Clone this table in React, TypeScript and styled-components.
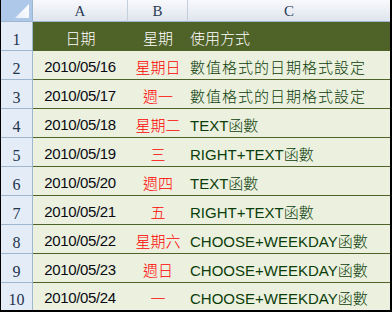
import React from 'react';
import styled, { createGlobalStyle } from 'styled-components';

const GlobalStyle = createGlobalStyle`
  html, body {
    margin: 0;
    padding: 0;
    background: #ffffff;
  }
  * {
    box-sizing: border-box;
  }
`;

const olive = '#4f6228';
const headerLine = '#9eb6ce';

const Sheet = styled.div`
  width: 392px;
  height: 312px;
  display: grid;
  grid-template-columns: 32px 95px 60px 1fr;
  grid-template-rows: 22px 29px repeat(8, 29px) 27px;
  border-left: 1px solid #000000;
  border-right: 2px solid #000000;
  border-bottom: 2px solid #000000;
  background: #ebf1de;
  overflow: hidden;
`;

const Corner = styled.div`
  position: relative;
  background: #aec8ea;
  border-right: 1px solid ${headerLine};
  border-bottom: 1px solid ${headerLine};
`;

const CornerMark = styled.svg`
  position: absolute;
  right: 3px;
  bottom: 3px;
`;

const ColHead = styled.div<{ $last?: boolean }>`
  display: flex;
  align-items: center;
  justify-content: center;
  padding-top: 2px;
  background: linear-gradient(#f8f9fc, #dfe5ee);
  border-right: ${({ $last }) => ($last ? 'none' : '1px solid #c3cfde')};
  border-bottom: 1px solid ${headerLine};
  font-family: 'Liberation Serif', serif;
  font-size: 15px;
  color: #2b3b52;
`;

const RowHead = styled.div<{ $last?: boolean }>`
  display: flex;
  align-items: flex-end;
  justify-content: center;
  padding-bottom: 1px;
  background: #e4ecf7;
  border-right: 1px solid ${headerLine};
  border-bottom: ${({ $last }) => ($last ? 'none' : `1px solid ${headerLine}`)};
  font-family: 'Liberation Serif', serif;
  font-size: 16px;
  color: #23344d;
`;

const Cell = styled.div<{
  $align?: 'center' | 'left';
  $title?: boolean;
  $last?: boolean;
}>`
  display: flex;
  align-items: center;
  justify-content: ${({ $align }) => ($align === 'left' ? 'flex-start' : 'center')};
  padding-left: ${({ $align }) => ($align === 'left' ? '2px' : '0')};
  padding-top: 2px;
  background: ${({ $title }) => ($title ? olive : '#ebf1de')};
  border-bottom: ${({ $last }) => ($last ? 'none' : `1px solid ${olive}`)};
  font-family: 'Liberation Sans', 'Noto Sans CJK TC', sans-serif;
  font-size: 15px;
  font-weight: 300;
  white-space: nowrap;
  color: ${({ $title }) => ($title ? '#ffffff' : '#0b3d0b')};
`;

const DateText = styled.span`
  color: #0a0a14;
  font-weight: 400;
  letter-spacing: -0.35px;
  padding-right: 1px;
`;

const WeekText = styled.span`
  color: #ff0000;
`;

// plain CJK descriptions sit a little looser than the mixed formula names
const MethodText = styled.span<{ $wide?: boolean }>`
  letter-spacing: ${({ $wide }) => ($wide ? '1px' : '0')};
`;

const rows: [string, string, string][] = [
  ['2010/05/16', '星期日', '數值格式的日期格式設定'],
  ['2010/05/17', '週一', '數值格式的日期格式設定'],
  ['2010/05/18', '星期二', 'TEXT函數'],
  ['2010/05/19', '三', 'RIGHT+TEXT函數'],
  ['2010/05/20', '週四', 'TEXT函數'],
  ['2010/05/21', '五', 'RIGHT+TEXT函數'],
  ['2010/05/22', '星期六', 'CHOOSE+WEEKDAY函數'],
  ['2010/05/23', '週日', 'CHOOSE+WEEKDAY函數'],
  ['2010/05/24', '一', 'CHOOSE+WEEKDAY函數'],
];

export default function App() {
  return (
    <>
      <GlobalStyle />
      <Sheet>
        <Corner>
          <CornerMark width="14" height="14" viewBox="0 0 14 14">
            <defs>
              <linearGradient id="cornerFill" x1="0" y1="1" x2="1" y2="0">
                <stop offset="0" stopColor="#e9f0fa" />
                <stop offset="1" stopColor="#ffffff" />
              </linearGradient>
            </defs>
            <polygon points="0,14 14,14 14,0" fill="url(#cornerFill)" />
          </CornerMark>
        </Corner>
        <ColHead>A</ColHead>
        <ColHead>B</ColHead>
        <ColHead $last>C</ColHead>

        <RowHead>1</RowHead>
        <Cell $title>日期</Cell>
        <Cell $title>星期</Cell>
        <Cell $title $align="left">使用方式</Cell>

        {rows.map(([date, week, method], i) => {
          const last = i === rows.length - 1;
          return (
            <React.Fragment key={date}>
              <RowHead $last={last}>{i + 2}</RowHead>
              <Cell $last={last}>
                <DateText>{date}</DateText>
              </Cell>
              <Cell $last={last}>
                <WeekText>{week}</WeekText>
              </Cell>
              <Cell $last={last} $align="left">
                <MethodText $wide={!/[A-Z]/.test(method)}>{method}</MethodText>
              </Cell>
            </React.Fragment>
          );
        })}
      </Sheet>
    </>
  );
}
